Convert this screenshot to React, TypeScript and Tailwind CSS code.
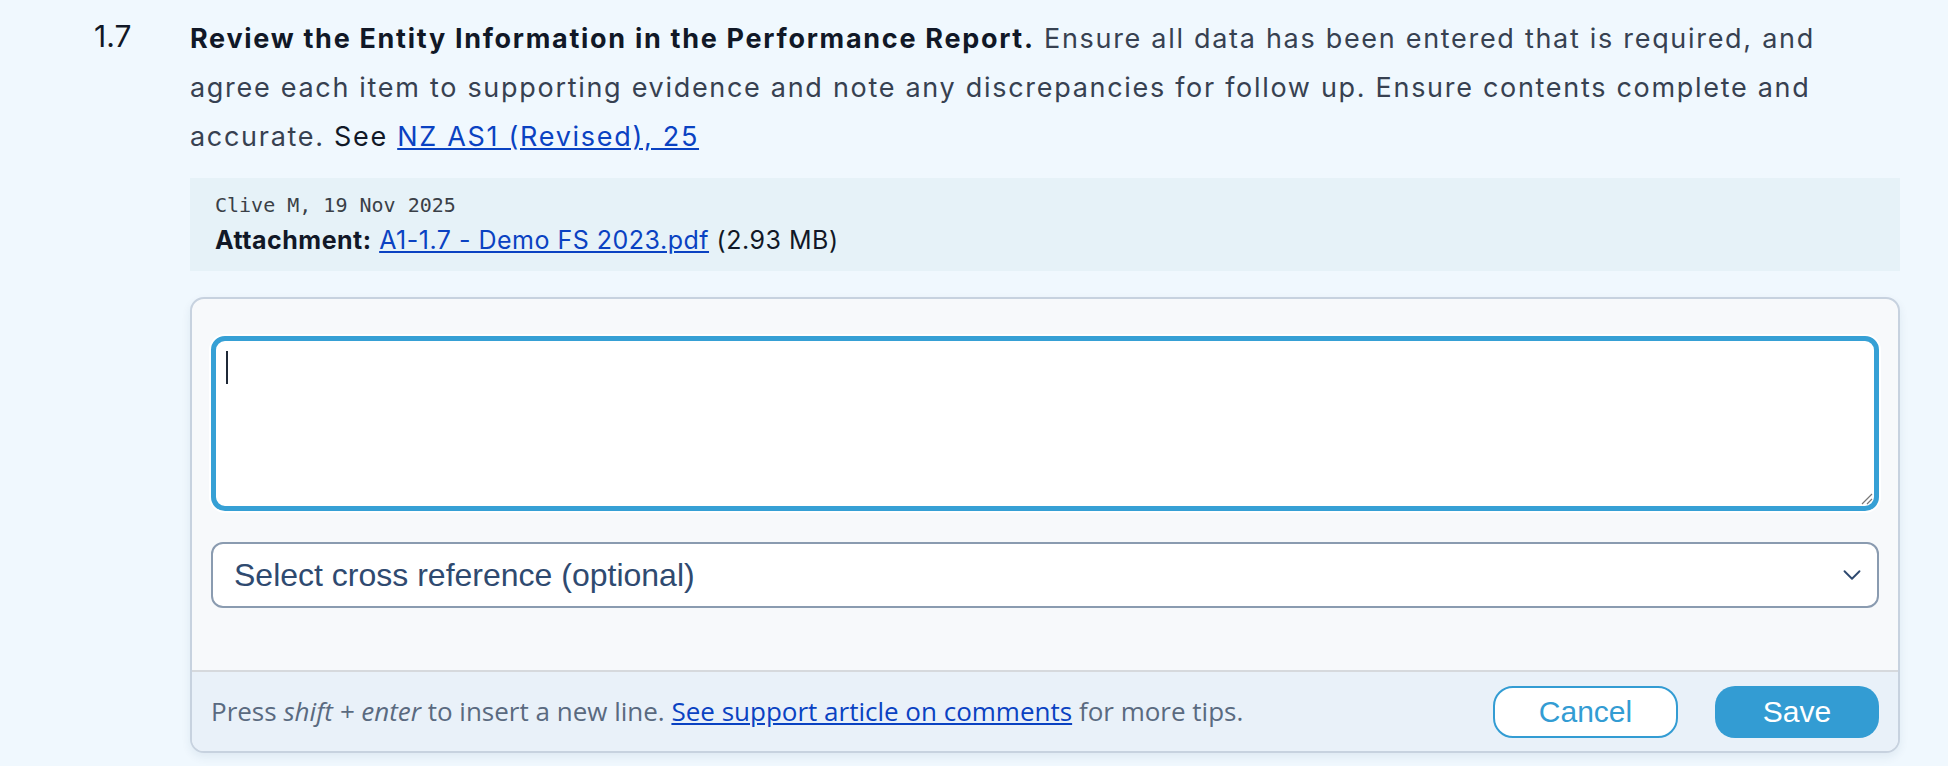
import { ChevronDown } from 'lucide-react'

function CommentEditor() {
  return (
    <div className="mt-[26px] overflow-hidden rounded-[14px] border-2 border-[#c7d2df] bg-[#f7f9fb] shadow-[0_4px_10px_rgba(30,60,100,0.08)]">
      <div className="px-[19px] pt-[37px] pb-[62px]">
        {/* fake focused textarea */}
        <div className="relative h-[175px] rounded-[14px] border-[5px] border-[#36a0d5] bg-white shadow-[0_0_0_2px_#ffffff]">
          <div className="ml-[10px] mt-[10px] h-[33px] w-[2px] bg-[#1f2937]" />
          <svg className="absolute bottom-[1px] right-[1px] h-[14px] w-[14px]" viewBox="0 0 14 14" aria-hidden="true">
            <path d="M13 3 L3 13 M13 8 L8 13" stroke="#777" strokeWidth="1.2" fill="none" />
          </svg>
        </div>
        <div className="mt-[31px] flex h-[66px] items-center justify-between rounded-[12px] border-2 border-[#8a9bb0] bg-white pl-[21px] pr-[10px] font-['Liberation_Sans',Arial,sans-serif] text-[32px] text-[#2f4a70]">
          <span>Select cross reference (optional)</span>
          <ChevronDown className="h-[30px] w-[30px] text-[#2f4a70]" strokeWidth={1.5} />
        </div>
      </div>
      <div className="flex h-[81px] items-center justify-between border-t-2 border-[#d6d9dd] bg-[#e9f1f9] pl-[19px] pr-[19px]">
        <p className="font-['Open_Sans',sans-serif] text-[26px] text-[#5a6a80]">
          Press <em>shift + enter</em> to insert a new line.{' '}
          <a href="#" className="text-[#0a42c2] underline">See support article on comments</a> for more tips.
        </p>
        <div className="flex items-center gap-[37px] font-['Liberation_Sans',Arial,sans-serif] text-[30px]">
          <button className="h-[52px] w-[185px] rounded-[20px] border-2 border-[#339cd3] bg-white text-[#339cd3]">
            Cancel
          </button>
          <button className="h-[52px] w-[164px] rounded-[20px] bg-[#339cd3] text-white">Save</button>
        </div>
      </div>
    </div>
  )
}

export default function App() {
  return (
    <div className="min-h-screen bg-[#f0f8fe] font-['Inter',sans-serif]">
      <div className="flex pl-[94px] pr-[48px] pt-[14px]">
        <div className="w-[96px] shrink-0 text-[30px] leading-[44px] text-[#111827]">1.7</div>
        <div className="min-w-0 flex-1">
          <p className="max-w-[1668px] text-[27px] leading-[49px] tracking-[1.7px] text-[#374151]">
            <strong className="font-bold text-[#111827]">Review the Entity Information in the Performance Report.</strong>{' '}
            Ensure all data has been entered that is required, and agree each item to supporting evidence and note any
            discrepancies for follow up. Ensure contents complete and accurate.{' '}
            <span className="text-[#111827]">See</span>{' '}
            <a href="#" className="text-[#0a42c2] underline">
              NZ AS1 (Revised), 25
            </a>
          </p>
          <div className="mt-[17px] bg-[#e6f2f8] px-[25px] pt-[12px] pb-[13px]">
            <div className="font-['DejaVu_Sans_Mono',monospace] text-[20px] leading-[30px] text-[#3a3f47]">
              Clive M, 19 Nov 2025
            </div>
            <div className="mt-[2px] text-[25px] leading-[36px] tracking-[0.5px] text-[#111827]">
              <span className="font-bold">Attachment:</span>{' '}
              <a href="#" className="text-[#0a42c2] underline">
                A1-1.7 - Demo FS 2023.pdf
              </a>{' '}
              (2.93 MB)
            </div>
          </div>
          <CommentEditor />
        </div>
      </div>
    </div>
  )
}
